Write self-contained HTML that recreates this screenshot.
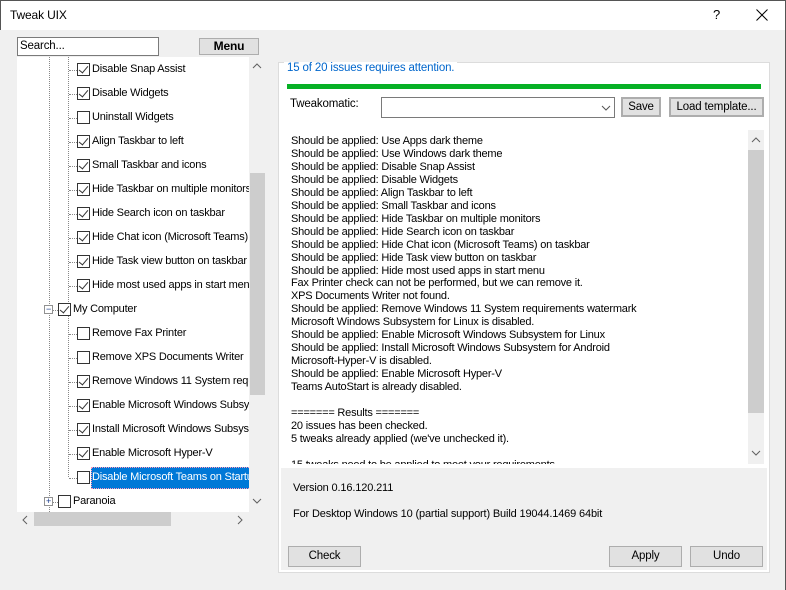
<!DOCTYPE html>
<html><head><style>
*{box-sizing:border-box;margin:0;padding:0}
body{width:786px;height:590px;background:#f0f0f0;font-family:"Liberation Sans",sans-serif;font-size:11px;letter-spacing:-0.15px;color:#000;position:relative;overflow:hidden}
.a{position:absolute;white-space:nowrap}
.btn{position:absolute;background:#e1e1e1;border:1px solid #adadad;text-align:center;line-height:18px;font-size:11.5px}
.cb{position:absolute;width:13px;height:13px;border:1px solid #333;background:#fff}
.ck::after{content:"";position:absolute;left:3px;top:0px;width:4px;height:8px;border:solid #333;border-width:0 1.5px 1.5px 0;transform:rotate(40deg)}
.dv{position:absolute;border-left:1px dotted #888}
.dh{position:absolute;border-top:1px dotted #888;width:8px}
</style></head><body>
<div class="a" style="left:0;top:0;width:786px;height:30px;background:#fff;border:1px solid #555;border-bottom:none"></div>
<div class="a" style="left:785px;top:0;width:1px;height:590px;background:#555"></div>
<div class="a" style="left:10px;top:8px;font-size:12px">Tweak UIX</div>
<div class="a" style="left:713px;top:7px;font-size:13px">?</div>
<svg class="a" style="left:756px;top:9px" width="12" height="12"><path d="M0.5 0.5L11.5 11.5M11.5 0.5L0.5 11.5" stroke="#000" stroke-width="1"/></svg>

<div class="a" style="left:17px;top:37px;width:142px;height:19px;background:#fff;border:1px solid #7a7a7a;padding:2px 2px;font-size:11.5px">Search...</div>
<div class="btn" style="left:199px;top:38px;width:60px;height:17px;line-height:15px;font-weight:bold;font-size:12px">Menu</div>

<div class="a" style="left:17px;top:57px;width:232px;height:455px;background:#fff;overflow:hidden">
<div class="dv" style="left:32px;top:0;height:455px"></div>
<div class="dv" style="left:51px;top:0;height:245px"></div>
<div class="dv" style="left:51px;top:258px;height:162px"></div>
<div id="t"></div>
</div>
<div class="a" style="left:249px;top:57px;width:16px;height:455px;background:#f0f0f0"></div>
<div class="a" style="left:250px;top:173px;width:15px;height:222px;background:#cdcdcd"></div>
<svg class="a" style="left:252px;top:63px" width="10" height="6"><path d="M1 5L5 1L9 5" stroke="#606060" fill="none"/></svg>
<svg class="a" style="left:252px;top:498px" width="10" height="6"><path d="M1 1L5 5L9 1" stroke="#606060" fill="none"/></svg>
<div class="a" style="left:17px;top:512px;width:232px;height:14px;background:#f0f0f0"></div>
<div class="a" style="left:34px;top:512px;width:137px;height:14px;background:#cdcdcd"></div>
<svg class="a" style="left:22px;top:515px" width="6" height="10"><path d="M5 1L1 5L5 9" stroke="#606060" fill="none"/></svg>
<svg class="a" style="left:237px;top:515px" width="6" height="10"><path d="M1 1L5 5L1 9" stroke="#606060" fill="none"/></svg>

<div class="a" style="left:278px;top:62px;width:492px;height:511px;background:#fff;border:1px solid #dcdcdc"></div>
<div class="a" style="left:281px;top:468px;width:486px;height:102px;background:#f0f0f0"></div>
<div class="a" style="left:284px;top:62px;background:#fff;padding:0 3px;color:#0066cc;font-size:11.5px">15 of 20 issues requires attention.</div>
<div class="a" style="left:287px;top:84px;width:474px;height:5px;background:#06b025"></div>
<div class="a" style="left:290px;top:98px;font-size:11.5px">Tweakomatic:</div>
<div class="a" style="left:381px;top:97px;width:234px;height:21px;border:1px solid #7a7a7a;background:#fff"></div>
<svg class="a" style="left:601px;top:105px" width="10" height="6"><path d="M1 1L5 5L9 1" stroke="#555" fill="none"/></svg>
<div class="btn" style="left:621px;top:97px;width:40px;height:20px;border-width:2px;line-height:16px">Save</div>
<div class="btn" style="left:669px;top:97px;width:95px;height:20px;border-width:2px;line-height:16px">Load template...</div>

<div class="a" style="left:284px;top:130px;width:480px;height:334px;background:#fff;overflow:hidden">
<div style="position:absolute;left:7px;top:5px;line-height:12.95px;white-space:pre;font-size:11px;letter-spacing:-0.2px">Should be applied: Use Apps dark theme
Should be applied: Use Windows dark theme
Should be applied: Disable Snap Assist
Should be applied: Disable Widgets
Should be applied: Align Taskbar to left
Should be applied: Small Taskbar and icons
Should be applied: Hide Taskbar on multiple monitors
Should be applied: Hide Search icon on taskbar
Should be applied: Hide Chat icon (Microsoft Teams) on taskbar
Should be applied: Hide Task view button on taskbar
Should be applied: Hide most used apps in start menu
Fax Printer check can not be performed, but we can remove it.
XPS Documents Writer not found.
Should be applied: Remove Windows 11 System requirements watermark
Microsoft Windows Subsystem for Linux is disabled.
Should be applied: Enable Microsoft Windows Subsystem for Linux
Should be applied: Install Microsoft Windows Subsystem for Android
Microsoft-Hyper-V is disabled.
Should be applied: Enable Microsoft Hyper-V
Teams AutoStart is already disabled.

======= Results =======
20 issues has been checked.
5 tweaks already applied (we've unchecked it).

15 tweaks need to be applied to meet your requirements.</div>
<div style="position:absolute;left:464px;top:0;width:16px;height:334px;background:#f0f0f0"></div>
<div style="position:absolute;left:464px;top:20px;width:16px;height:263px;background:#cdcdcd"></div>
<svg style="position:absolute;left:467px;top:7px" width="10" height="6"><path d="M1 5L5 1L9 5" stroke="#606060" fill="none"/></svg>
<svg style="position:absolute;left:467px;top:320px" width="10" height="6"><path d="M1 1L5 5L9 1" stroke="#606060" fill="none"/></svg>
</div>
<div class="a" style="left:293px;top:482px">Version 0.16.120.211</div>
<div class="a" style="left:293px;top:508px">For Desktop Windows 10 (partial support) Build 19044.1469 64bit</div>
<div class="btn" style="left:288px;top:546px;width:73px;height:21px">Check</div>
<div class="btn" style="left:609px;top:546px;width:73px;height:21px">Apply</div>
<div class="btn" style="left:690px;top:546px;width:73px;height:21px">Undo</div>

<script>
var rows=[[1,"Disable Snap Assist",1],[1,"Disable Widgets",1],[1,"Uninstall Widgets",0],[1,"Align Taskbar to left",1],[1,"Small Taskbar and icons",1],[1,"Hide Taskbar on multiple monitors",1],[1,"Hide Search icon on taskbar",1],[1,"Hide Chat icon (Microsoft Teams) on taskbar",1],[1,"Hide Task view button on taskbar",1],[1,"Hide most used apps in start menu",1],[0,"My Computer",1,"−"],[1,"Remove Fax Printer",0],[1,"Remove XPS Documents Writer",0],[1,"Remove Windows 11 System requirements",1],[1,"Enable Microsoft Windows Subsystem for Linux",1],[1,"Install Microsoft Windows Subsystem for Android",1],[1,"Enable Microsoft Hyper-V",1],[1,"Disable Microsoft Teams on Startup",0,null,1],[0,"Paranoia",0,"+"]];
var h="";rows.forEach(function(r,i){var y=6+i*24;var cx=r[0]?60:41;
h+='<div class="dh" style="left:'+(r[0]?52:33)+'px;top:'+(y+7)+'px"></div>';
if(r[3])h+='<div style="position:absolute;left:27px;top:'+(y+2)+'px;width:9px;height:9px;border:1px solid #919191;background:#fff;font-size:9px;line-height:7px;text-align:center;color:#1a3c8c">'+r[3]+'</div>';
h+='<div class="cb'+(r[2]?' ck':'')+'" style="left:'+cx+'px;top:'+y+'px"></div>';
var tx=cx+15;
if(r[4])h+='<div style="position:absolute;left:'+(tx-1)+'px;top:'+(y-4)+'px;width:200px;height:22px;background:#0078d7;border:1px dotted #f9b"></div>';
h+='<div style="position:absolute;left:'+tx+'px;top:'+(y)+'px;white-space:nowrap;letter-spacing:-0.2px;'+(r[4]?'color:#fff':'')+'">'+r[1]+'</div>';});
document.getElementById("t").innerHTML=h;
</script>
</body></html>
